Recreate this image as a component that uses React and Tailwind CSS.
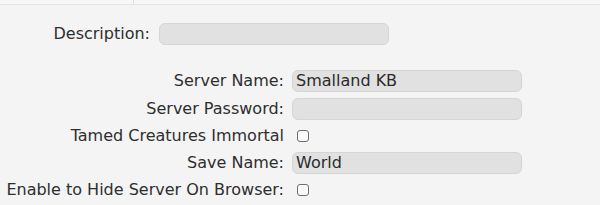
import React from "react";

function Field({ value }) {
    return (
        <div className="w-[230px] h-[22px] rounded-[6px] bg-[#e1e1e1] border border-[#d5d5d5] px-[3px] flex items-center text-[16px] text-[#2a2a2a] leading-none">
            {value}
        </div>
    );
}

function Check() {
    return (
        <div className="ml-[5px] w-[12px] h-[12px] rounded-[3px] border border-[#707070] bg-[#fafafa]" />
    );
}

export default function App() {
    const rows = [
        { label: "Server Name:", value: "Smalland KB", h: "h-[29px]" },
        { label: "Server Password:", value: "", h: "h-[28px]" },
        { label: "Tamed Creatures Immortal", check: true, h: "h-[25px]" },
        { label: "Save Name:", value: "World", h: "h-[30px]" },
        { label: "Enable to Hide Server On Browser:", check: true, h: "h-[24px]" }
    ];

    return (
        <div
            className="w-[600px] h-[205px] bg-[#f4f4f4] text-[#2e2e2e] overflow-hidden"
            style={{ fontFamily: '"DejaVu Sans", sans-serif' }}>
            <div className="h-[5px] flex border-b border-[#e4e4e6] bg-[#f7f7f8]">
                <div className="w-[134px] border-r border-[#dfe0e2]" />
            </div>

            <div className="flex items-center mt-[18px] h-[22px]">
                <div className="w-[150px] text-right text-[16px] whitespace-nowrap">Description:</div>
                <div className="ml-[9px]">
                    <Field value="" />
                </div>
            </div>

            <div className="mt-[21px]">
                {rows.map((row, i) => (
                    <div key={i} className={`flex items-center ${row.h}`}>
                        <div className="w-[284px] text-right text-[16px] whitespace-nowrap">{row.label}</div>
                        <div className="ml-[8px]">
                            {row.check ? <Check /> : <Field value={row.value} />}
                        </div>
                    </div>
                ))}
            </div>
        </div>
    );
}
